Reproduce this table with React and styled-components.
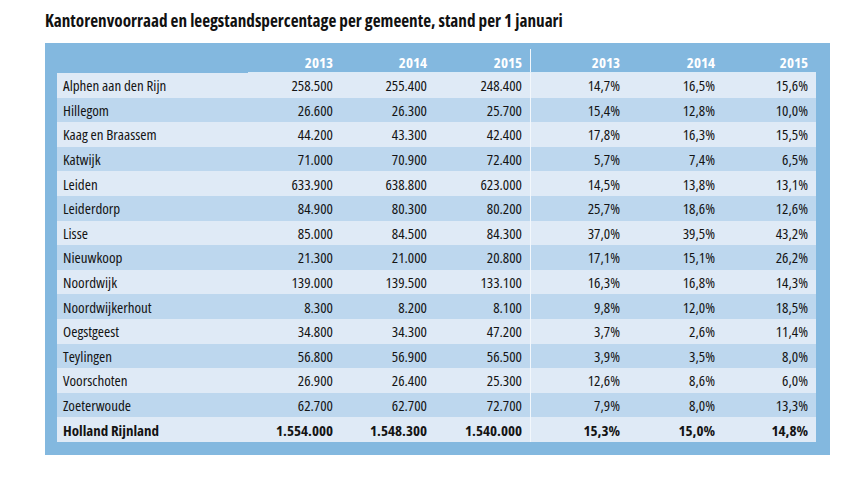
import React from 'react'
import styled, { createGlobalStyle } from 'styled-components'

const GlobalStyle = createGlobalStyle`
  body {
    margin: 0;
    background: #ffffff;
    font-family: 'Open Sans', 'Noto Sans', 'Liberation Sans', sans-serif;
    font-stretch: 75%;
    color: #141414;
  }
`

const COLUMNS = '191px 93px 94px 95px 98px 95px 93px'

const Page = styled.div`
  width: 850px;
  height: 479px;
  padding: 10px 0 0 45px;
  box-sizing: border-box;
`

const Title = styled.h1`
  margin: 0 0 11px 0;
  font-size: 17.2px;
  line-height: 22px;
  font-weight: bold;
  color: #111;
`

const Panel = styled.div`
  width: 785px;
  box-sizing: border-box;
  background: #83b8df;
  padding: 6px 14px 13px 12px;
`

const Row = styled.div`
  display: grid;
  grid-template-columns: ${COLUMNS};
  height: ${p => (p.$head ? '24px' : '24.6px')};
  background: ${p => (p.$head ? 'transparent' : p.$alt ? '#bdd7ee' : '#dfeaf6')};
  font-weight: ${p => (p.$bold ? 'bold' : 450)};
`

const Cell = styled.div`
  display: flex;
  align-items: center;
  justify-content: ${p => (p.$name ? 'flex-start' : 'flex-end')};
  padding: ${p => (p.$name ? '0 0 0 6px' : '0 8px 0 0')};
  font-size: 15px;
  white-space: nowrap;
  border-left: ${p => (p.$split ? '1px solid #f2f7fc' : 'none')};
`

const HeadCell = styled(Cell)`
  color: #ffffff;
  font-weight: bold;
  padding-top: 2px;
  border-bottom: ${p => (p.$name ? 'none' : '1px solid #dcebf7')};
`

const years = ['2013', '2014', '2015', '2013', '2014', '2015']

const rows = [
  ['Alphen aan den Rijn', '258.500', '255.400', '248.400', '14,7%', '16,5%', '15,6%'],
  ['Hillegom', '26.600', '26.300', '25.700', '15,4%', '12,8%', '10,0%'],
  ['Kaag en Braassem', '44.200', '43.300', '42.400', '17,8%', '16,3%', '15,5%'],
  ['Katwijk', '71.000', '70.900', '72.400', '5,7%', '7,4%', '6,5%'],
  ['Leiden', '633.900', '638.800', '623.000', '14,5%', '13,8%', '13,1%'],
  ['Leiderdorp', '84.900', '80.300', '80.200', '25,7%', '18,6%', '12,6%'],
  ['Lisse', '85.000', '84.500', '84.300', '37,0%', '39,5%', '43,2%'],
  ['Nieuwkoop', '21.300', '21.000', '20.800', '17,1%', '15,1%', '26,2%'],
  ['Noordwijk', '139.000', '139.500', '133.100', '16,3%', '16,8%', '14,3%'],
  ['Noordwijkerhout', '8.300', '8.200', '8.100', '9,8%', '12,0%', '18,5%'],
  ['Oegstgeest', '34.800', '34.300', '47.200', '3,7%', '2,6%', '11,4%'],
  ['Teylingen', '56.800', '56.900', '56.500', '3,9%', '3,5%', '8,0%'],
  ['Voorschoten', '26.900', '26.400', '25.300', '12,6%', '8,6%', '6,0%'],
  ['Zoeterwoude', '62.700', '62.700', '72.700', '7,9%', '8,0%', '13,3%'],
  ['Holland Rijnland', '1.554.000', '1.548.300', '1.540.000', '15,3%', '15,0%', '14,8%'],
]

const App = () => {
  return (
    <Page>
      <GlobalStyle />
      <Title>Kantorenvoorraad en leegstandspercentage per gemeente, stand per 1 januari</Title>
      <Panel>
        <Row $head>
          <HeadCell $name />
          {years.map((y, i) => (
            <HeadCell key={i} $split={i === 3}>
              {y}
            </HeadCell>
          ))}
        </Row>
        {rows.map((r, idx) => (
          <Row key={r[0]} $alt={idx % 2 === 1} $bold={idx === rows.length - 1}>
            {r.map((v, i) => (
              <Cell key={i} $name={i === 0} $split={i === 4}>
                {v}
              </Cell>
            ))}
          </Row>
        ))}
      </Panel>
    </Page>
  )
}

export default App
